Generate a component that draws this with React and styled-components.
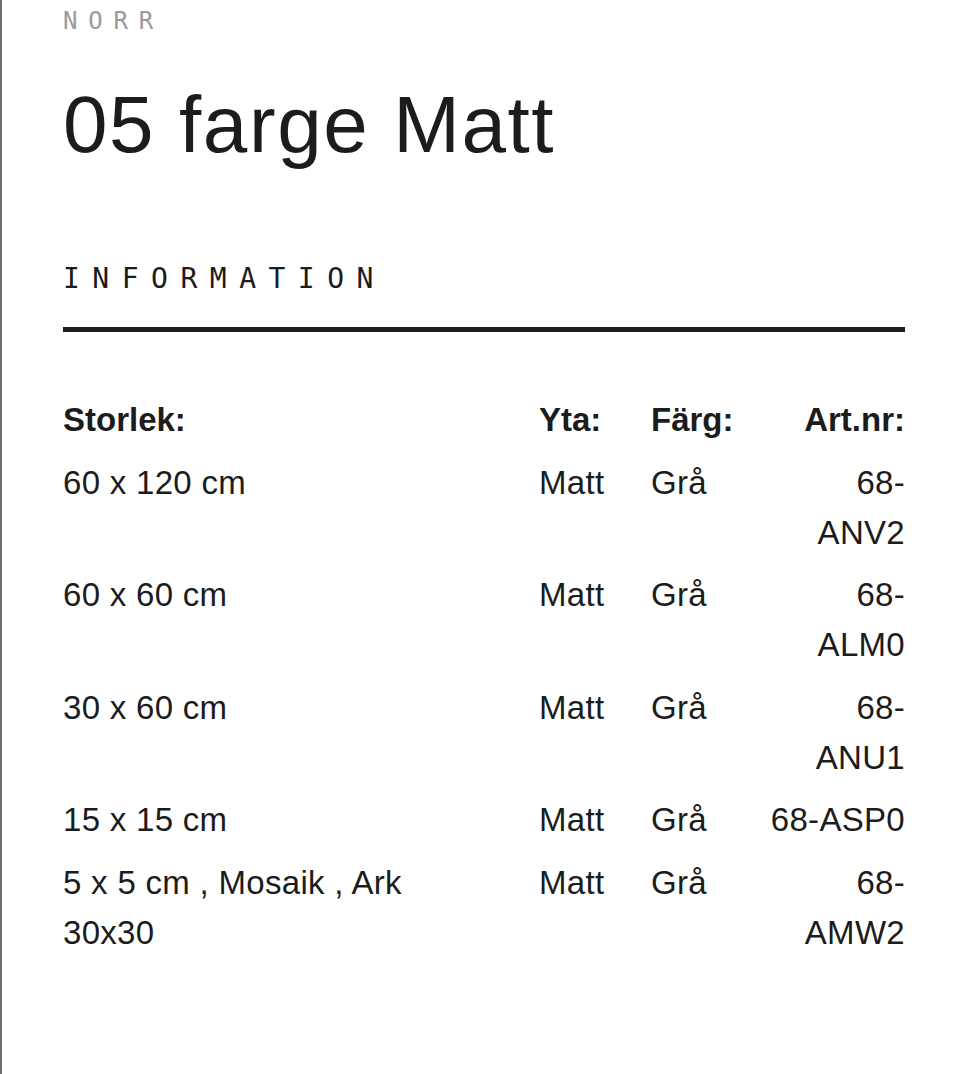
import React from "react";
import styled, { createGlobalStyle } from "styled-components";

const Global = createGlobalStyle`
  html, body { margin: 0; padding: 0; background: #ffffff; }
  body { font-family: "Liberation Sans", Arial, sans-serif; color: #1c1c1c; }
`;

const Page = styled.div`
  box-sizing: border-box;
  min-height: 1074px;
  border-left: 2px solid #6e6e6e;
  padding: 9px 55px 40px 61px;
  display: flex;
  flex-direction: column;
`;

const Brand = styled.div`
  font-family: "DejaVu Sans Mono", monospace;
  font-size: 24px;
  line-height: 24px;
  letter-spacing: 10.8px;
  color: #9a9a9a;
`;

const Title = styled.h1`
  margin: 52px 0 0;
  font-family: "Liberation Sans", Arial, sans-serif;
  font-weight: 400;
  font-size: 80px;
  line-height: 80px;
  letter-spacing: 1.6px;
  color: #1c1c1c;
`;

const SectionLabel = styled.h2`
  margin: 100px 0 0;
  font-family: "DejaVu Sans Mono", monospace;
  font-weight: 400;
  font-size: 28px;
  line-height: 28px;
  letter-spacing: 12.5px;
  color: #1c1c1c;
`;

const Rule = styled.hr`
  margin: 34px 0 0;
  border: none;
  height: 5px;
  background: #1e1e1e;
`;

const Table = styled.div`
  margin-top: 63px;
  display: grid;
  grid-template-columns: 1fr 112px 112px 142px;
  row-gap: 12.5px;
  font-size: 33px;
  line-height: 50px;
`;

const Cell = styled.div`
  font-weight: ${(p) => (p.$head ? 700 : 400)};
  letter-spacing: ${(p) => (p.$head ? "0" : "0.3px")};
  text-align: ${(p) => (p.$right ? "right" : "left")};
  padding-right: ${(p) => (p.$first ? "60px" : "0")};
`;

const Line = styled.span`
  display: block;
`;

const rows = [
  { size: "60 x 120 cm", yta: "Matt", farg: "Grå", art: ["68-", "ANV2"] },
  { size: "60 x 60 cm", yta: "Matt", farg: "Grå", art: ["68-", "ALM0"] },
  { size: "30 x 60 cm", yta: "Matt", farg: "Grå", art: ["68-", "ANU1"] },
  { size: "15 x 15 cm", yta: "Matt", farg: "Grå", art: ["68-ASP0"] },
  { size: "5 x 5 cm , Mosaik , Ark 30x30", yta: "Matt", farg: "Grå", art: ["68-", "AMW2"] },
];

export default function App() {
  return (
    <>
      <Global />
      <Page>
        <Brand>NORR</Brand>
        <Title>05 farge Matt</Title>
        <SectionLabel>INFORMATION</SectionLabel>
        <Rule />
        <Table>
          <Cell $head $first>Storlek:</Cell>
          <Cell $head>Yta:</Cell>
          <Cell $head>Färg:</Cell>
          <Cell $head $right>Art.nr:</Cell>
          {rows.map((r, i) => (
            <React.Fragment key={i}>
              <Cell $first>{r.size}</Cell>
              <Cell>{r.yta}</Cell>
              <Cell>{r.farg}</Cell>
              <Cell $right>
                {r.art.map((l, j) => (
                  <Line key={j}>{l}</Line>
                ))}
              </Cell>
            </React.Fragment>
          ))}
        </Table>
      </Page>
    </>
  );
}
